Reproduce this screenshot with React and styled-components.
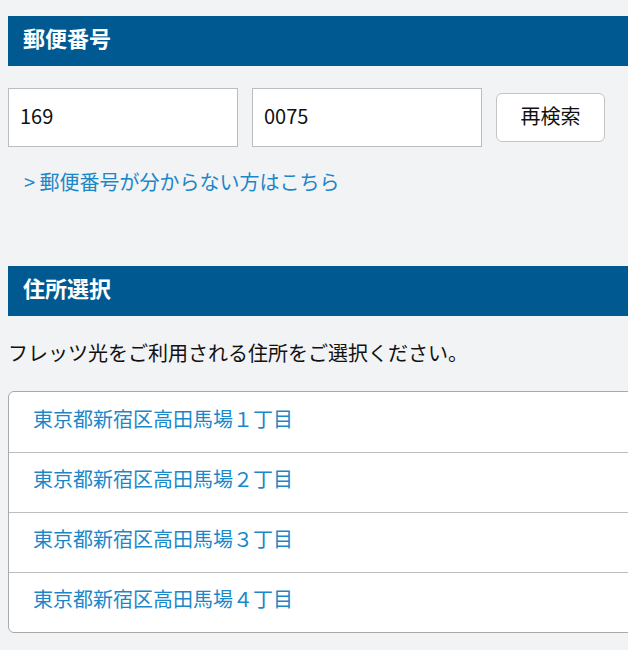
import React from "react";
import styled, { createGlobalStyle } from "styled-components";

const GlobalStyle = createGlobalStyle`
    html, body {
        margin: 0;
        padding: 0;
        background: #f2f3f5;
        overflow: hidden;
    }
    body {
        padding: 8px;
        font-family: "Noto Sans CJK JP", "Noto Sans", sans-serif;
        color: #111;
    }
`;

const addresses = [
    "東京都新宿区高田馬場１丁目",
    "東京都新宿区高田馬場２丁目",
    "東京都新宿区高田馬場３丁目",
    "東京都新宿区高田馬場４丁目",
];

const App = () => {
    return (
        <>
            <GlobalStyle />
            <Page>
                <SectionTitle>郵便番号</SectionTitle>
                <ZipRow>
                    <ZipInput defaultValue="169" />
                    <ZipInput defaultValue="0075" />
                    <SearchButton>再検索</SearchButton>
                </ZipRow>
                <HelpLink href="#">&gt; 郵便番号が分からない方はこちら</HelpLink>

                <SectionTitle spaced>住所選択</SectionTitle>
                <Lead>フレッツ光をご利用される住所をご選択ください。</Lead>
                <AddressList>
                    {addresses.map((a) => (
                        <AddressItem key={a}>
                            <AddressLink href="#">{a}</AddressLink>
                        </AddressItem>
                    ))}
                </AddressList>
            </Page>
        </>
    );
};

export default App;

const Page = styled.div`
    width: 680px;
    padding-top: 8px;
`;

const SectionTitle = styled.h2`
    box-sizing: border-box;
    margin: ${({ spaced }) => (spaced ? "71px" : "0")} 0 0;
    height: 50px;
    display: flex;
    align-items: center;
    padding: 0 15px 8px;
    background: #005a91;
    color: #fff;
    font-size: 22px;
    font-weight: 700;
`;

const ZipRow = styled.div`
    margin-top: 22px;
    display: flex;
    align-items: center;
    gap: 14px;
`;

const ZipInput = styled.input`
    box-sizing: border-box;
    width: 230px;
    height: 59px;
    padding: 0 11px 4px;
    border: 1px solid #bdbdbd;
    background: #fff;
    font-family: "Noto Sans CJK JP", "Noto Sans", sans-serif;
    font-size: 20px;
    color: #111;
    outline: none;
`;

const SearchButton = styled.button`
    box-sizing: border-box;
    width: 109px;
    height: 49px;
    padding: 0 0 4px;
    border: 1px solid #c4c4c4;
    border-radius: 6px;
    background: #fff;
    font-family: "Noto Sans CJK JP", "Noto Sans", sans-serif;
    font-size: 20px;
    color: #111;
`;

const HelpLink = styled.a`
    display: block;
    margin: 22px 0 0 16px;
    color: #1a87c9;
    font-size: 20px;
    text-decoration: none;
    line-height: 26px;
`;

const Lead = styled.p`
    margin: 23px 0 0;
    font-size: 20px;
    line-height: 28px;
`;

const AddressList = styled.ul`
    list-style: none;
    margin: 24px 0 0;
    padding: 0;
    background: #fff;
    border: 1px solid #a9a9a9;
    border-radius: 6px;
`;

const AddressItem = styled.li`
    box-sizing: border-box;
    height: 60px;
    display: flex;
    align-items: center;
    padding: 0 0 8px 24px;
    & + & {
        border-top: 1px solid #bdbdbd;
    }
`;

const AddressLink = styled.a`
    color: #1a87c9;
    font-size: 20px;
    text-decoration: none;
`;
